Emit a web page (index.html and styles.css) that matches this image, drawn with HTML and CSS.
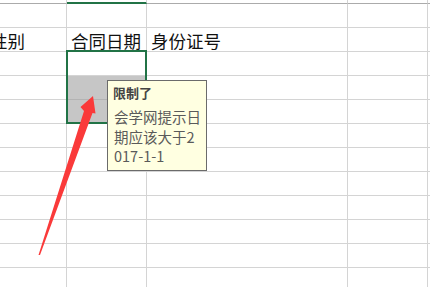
FILE: index.html
```html
<!DOCTYPE html>
<html lang="zh-CN">
<head>
    <meta charset="UTF-8">
    <title>合同日期 数据验证</title>
    <link rel="stylesheet" href="styles.css">
</head>
<body>

<div class="sheet">
    <div class="grid">
        <!-- column header strip -->
        <div class="head"></div>
        <div class="head head-sel"></div>
        <div class="head"></div>
        <div class="head"></div>
        <div class="head"></div>

        <!-- row 1 -->
        <div class="cell"></div><div class="cell"></div><div class="cell"></div><div class="cell"></div><div class="cell"></div>

        <!-- row 2: titles -->
        <div class="cell"><span class="txt">性别</span></div>
        <div class="cell"><span class="txt">合同日期</span></div>
        <div class="cell"><span class="txt">身份证号</span></div>
        <div class="cell"></div>
        <div class="cell"></div>

        <!-- row 3 (active cell) -->
        <div class="cell"></div><div class="cell"></div><div class="cell"></div><div class="cell"></div><div class="cell"></div>

        <!-- rows 4-5 (selected range) -->
        <div class="cell"></div><div class="cell shade"></div><div class="cell"></div><div class="cell"></div><div class="cell"></div>
        <div class="cell"></div><div class="cell shade"></div><div class="cell"></div><div class="cell"></div><div class="cell"></div>

        <div class="cell"></div><div class="cell"></div><div class="cell"></div><div class="cell"></div><div class="cell"></div>
        <div class="cell"></div><div class="cell"></div><div class="cell"></div><div class="cell"></div><div class="cell"></div>
        <div class="cell"></div><div class="cell"></div><div class="cell"></div><div class="cell"></div><div class="cell"></div>
        <div class="cell"></div><div class="cell"></div><div class="cell"></div><div class="cell"></div><div class="cell"></div>
        <div class="cell"></div><div class="cell"></div><div class="cell"></div><div class="cell"></div><div class="cell"></div>
        <div class="cell"></div><div class="cell"></div><div class="cell"></div><div class="cell"></div><div class="cell"></div>
        <div class="cell"></div><div class="cell"></div><div class="cell"></div><div class="cell"></div><div class="cell"></div>
    </div>

    <div class="selection"></div>
</div>

<div class="tip">
    <div class="tip-title">限制了</div>
    <div class="tip-body">会学网提示日<br>期应该大于2<br>017-1-1</div>
</div>

<svg class="arrow" width="430" height="287" viewBox="0 0 430 287">
    <polygon points="93,96 95.5,113.5 92.5,113 40,255 38.5,255 84,111 80.5,107" fill="#fa3a3a"/>
</svg>

</body>
</html>
```

FILE: styles.css
```css
body {
    margin: 0;
    background: #fff;
    overflow: hidden;
    font-family: "Noto Sans CJK SC", "Noto Sans", sans-serif;
}
.sheet {
    position: relative;
    margin-left: -14px;
}
.grid {
    display: grid;
    grid-template-columns: 81px 80px 201px 80px 80px;
    grid-template-rows: 4px;
    grid-auto-rows: 24px;
}
.head {
    border-right: 1px solid #d4d4d4;
    border-bottom: 1px solid #ababab;
}
.head-sel {
    border-bottom: 2px solid #217346;
}
.cell {
    border-right: 1px solid #d4d4d4;
    border-bottom: 1px solid #d4d4d4;
    display: flex;
    align-items: flex-end;
    padding-left: 4px;
    white-space: nowrap;
}
.txt {
    font-size: 17.5px;
    line-height: 20px;
    color: #111;
}
.shade {
    background: #c6c6c6;
    border-bottom-color: #b3b3b3;
}
.selection {
    position: absolute;
    left: 80px;
    top: 50px;
    width: 81px;
    height: 74px;
    box-sizing: border-box;
    border: 2px solid #217346;
}
.tip {
    position: absolute;
    left: 107px;
    top: 80px;
    width: 100px;
    height: 91px;
    box-sizing: border-box;
    border: 1px solid #6b6b6b;
    background: #ffffe1;
    padding: 3px 4px 0 5px;
}
.tip-title {
    font-size: 13px;
    font-weight: bold;
    line-height: 18px;
    color: #444;
}
.tip-body {
    margin-top: 5px;
    margin-left: 1px;
    font-size: 14.5px;
    line-height: 19.5px;
    color: #5a5a5a;
}
.arrow {
    position: absolute;
    left: 0;
    top: 0;
}
```
